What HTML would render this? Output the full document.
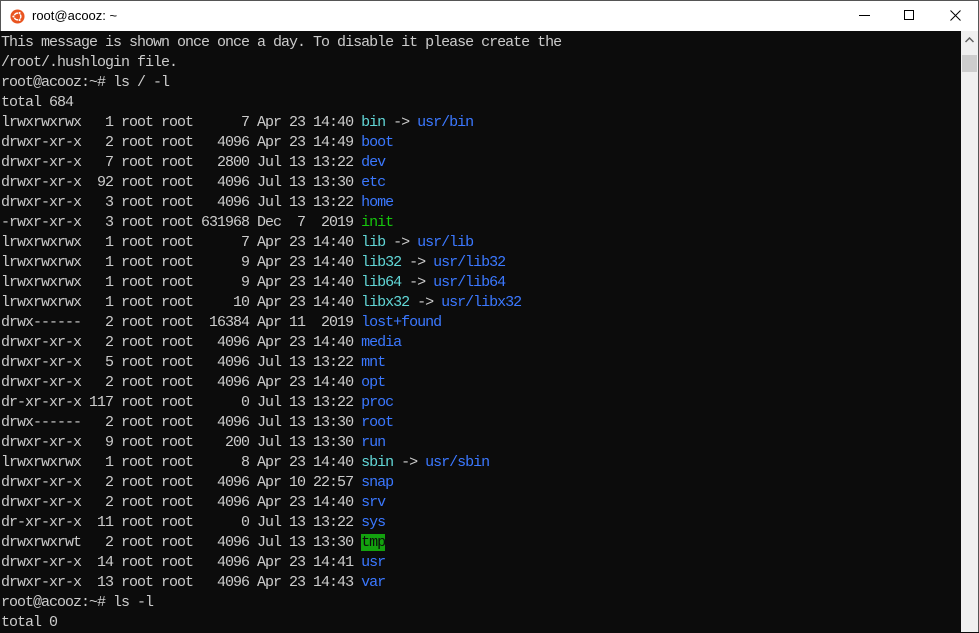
<!DOCTYPE html>
<html><head><meta charset="utf-8"><style>
*{margin:0;padding:0;box-sizing:border-box}
body{width:979px;height:632px;overflow:hidden;background:#0c0c0c;position:relative;font-family:"Liberation Sans",sans-serif}
#tb{position:absolute;left:0;top:0;width:979px;height:31px;background:#fff;border:1px solid #555;border-bottom:none}
#tb .t{position:absolute;left:31px;top:7px;font-size:13px;color:#000}
#term{position:absolute;left:1px;top:33px;font-family:"Liberation Mono",monospace;font-size:15px;letter-spacing:-1px;line-height:20px;color:#cccccc;white-space:pre}
.b{color:#3b78ff}.c{color:#61d6d6}.g{color:#16c60c}.h{background:#13a10e;color:#0c0c0c}
#sb{position:absolute;left:961px;top:31px;width:17px;height:601px;background:#f0f0f0}
#th{position:absolute;left:962px;top:55px;width:15px;height:17px;background:#cdcdcd}
#rb{position:absolute;right:0;top:0;width:1px;height:632px;background:#555}
</style></head><body>
<div id="tb">
<svg style="position:absolute;left:9px;top:8px" width="15" height="15" viewBox="0 0 16 16"><circle cx="8" cy="8" r="7.5" fill="#e95420"/><circle cx="8" cy="8" r="3.6" fill="none" stroke="#fff" stroke-width="1.5"/><circle cx="3.6" cy="8" r="1.4" fill="#fff" stroke="#e95420" stroke-width=".6"/><circle cx="10.2" cy="4.2" r="1.4" fill="#fff" stroke="#e95420" stroke-width=".6"/><circle cx="10.2" cy="11.8" r="1.4" fill="#fff" stroke="#e95420" stroke-width=".6"/></svg>
<span class="t">root@acooz: ~</span>
<svg style="position:absolute;left:858px;top:14px" width="12" height="2"><rect width="11" height="1" fill="#000"/></svg>
<svg style="position:absolute;left:903px;top:9px" width="11" height="11"><rect x=".5" y=".5" width="9" height="9" fill="none" stroke="#000"/></svg>
<svg style="position:absolute;left:949px;top:9px" width="12" height="12"><path d="M.5 .5L10.5 10.5M10.5 .5L.5 10.5" stroke="#000"/></svg>
</div>
<div id="term">This message is shown once once a day. To disable it please create the
/root/.hushlogin file.
root@acooz:~# ls / -l
total 684
lrwxrwxrwx   1 root root      7 Apr 23 14:40 <span class="c">bin</span> -&gt; <span class="b">usr/bin</span>
drwxr-xr-x   2 root root   4096 Apr 23 14:49 <span class="b">boot</span>
drwxr-xr-x   7 root root   2800 Jul 13 13:22 <span class="b">dev</span>
drwxr-xr-x  92 root root   4096 Jul 13 13:30 <span class="b">etc</span>
drwxr-xr-x   3 root root   4096 Jul 13 13:22 <span class="b">home</span>
-rwxr-xr-x   3 root root 631968 Dec  7  2019 <span class="g">init</span>
lrwxrwxrwx   1 root root      7 Apr 23 14:40 <span class="c">lib</span> -&gt; <span class="b">usr/lib</span>
lrwxrwxrwx   1 root root      9 Apr 23 14:40 <span class="c">lib32</span> -&gt; <span class="b">usr/lib32</span>
lrwxrwxrwx   1 root root      9 Apr 23 14:40 <span class="c">lib64</span> -&gt; <span class="b">usr/lib64</span>
lrwxrwxrwx   1 root root     10 Apr 23 14:40 <span class="c">libx32</span> -&gt; <span class="b">usr/libx32</span>
drwx------   2 root root  16384 Apr 11  2019 <span class="b">lost+found</span>
drwxr-xr-x   2 root root   4096 Apr 23 14:40 <span class="b">media</span>
drwxr-xr-x   5 root root   4096 Jul 13 13:22 <span class="b">mnt</span>
drwxr-xr-x   2 root root   4096 Apr 23 14:40 <span class="b">opt</span>
dr-xr-xr-x 117 root root      0 Jul 13 13:22 <span class="b">proc</span>
drwx------   2 root root   4096 Jul 13 13:30 <span class="b">root</span>
drwxr-xr-x   9 root root    200 Jul 13 13:30 <span class="b">run</span>
lrwxrwxrwx   1 root root      8 Apr 23 14:40 <span class="c">sbin</span> -&gt; <span class="b">usr/sbin</span>
drwxr-xr-x   2 root root   4096 Apr 10 22:57 <span class="b">snap</span>
drwxr-xr-x   2 root root   4096 Apr 23 14:40 <span class="b">srv</span>
dr-xr-xr-x  11 root root      0 Jul 13 13:22 <span class="b">sys</span>
drwxrwxrwt   2 root root   4096 Jul 13 13:30 <span class="h">tmp</span>
drwxr-xr-x  14 root root   4096 Apr 23 14:41 <span class="b">usr</span>
drwxr-xr-x  13 root root   4096 Apr 23 14:43 <span class="b">var</span>
root@acooz:~# ls -l
total 0</div>
<div id="sb"></div>
<svg style="position:absolute;left:965px;top:37px" width="9" height="6"><path d="M.5 5L4.5 1L8.5 5" fill="none" stroke="#606060" stroke-width="1.5"/></svg>
<div id="th"></div>
<div id="rb"></div>
</body></html>
